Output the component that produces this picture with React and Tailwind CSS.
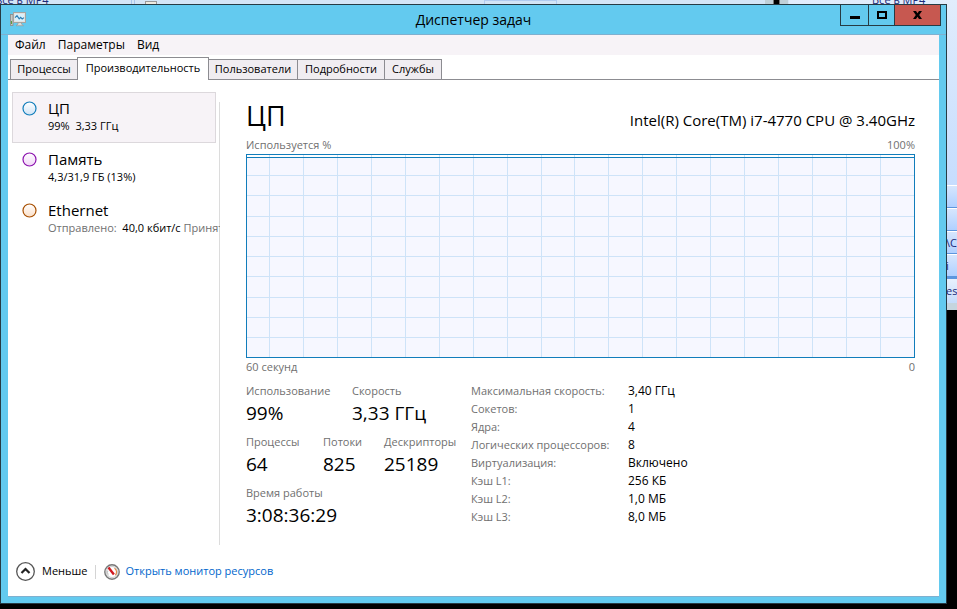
import React, { useState } from 'react';

const tabs = [
  { name: 'Процессы', width: 'w-[68px]' },
  { name: 'Производительность', width: 'w-[132px]' },
  { name: 'Пользователи', width: 'w-[90px]' },
  { name: 'Подробности', width: 'w-[88px]' },
  { name: 'Службы', width: 'w-[58px]' },
];

const details = [
  ['Максимальная скорость:', '3,40 ГГц'],
  ['Сокетов:', '1'],
  ['Ядра:', '4'],
  ['Логических процессоров:', '8'],
  ['Виртуализация:', 'Включено'],
  ['Кэш L1:', '256 КБ'],
  ['Кэш L2:', '1,0 МБ'],
  ['Кэш L3:', '8,0 МБ'],
];

const columns = Array.from({ length: 19 }, (_, i) => 3.4 + i * 5.085);
const rows = Array.from({ length: 9 }, (_, i) => 10.2 + i * 10.03);

function Desktop() {
  return (
    <div className="absolute inset-x-0 top-0 h-[310px] overflow-hidden bg-[#d4e5f6] text-[11px] text-[#1a2a78]" aria-hidden="true">
      <span className="absolute -left-1 -top-2 leading-4">все в MP4</span>
      <span className="absolute left-[131px] top-0 h-2 w-1 border-x border-[#a9c6ec]" />
      <span className="absolute left-[145px] top-px h-2 w-3 border border-[#999] bg-[#eeeae0]" />
      <span className="absolute left-[484px] top-0 h-2 w-[73px] border border-[#b1ccf1]" />
      <span className="absolute left-[765px] top-0 h-2 w-[23px] bg-[#c0d0d8]" />
      <span className="absolute left-[773px] top-0 h-2 w-[7px] border-x border-[#777] bg-black" />
      <div className="absolute right-0 top-0 h-full w-[168px] bg-linear-to-b from-[#e1edfc] to-[#b4d2ff]">
        <span className="absolute -top-2 left-[83px] leading-4">Все в MP4</span>
      </div>
      <div className="absolute right-0 top-[185px] w-[11px]">
        <div className="h-[23px] border-b border-t border-b-[#5d96dd] border-t-white bg-linear-to-b from-[#d6e6fd] to-[#b0d0ff]" />
        <div className="h-[23px] border-b border-t border-b-[#5d96dd] border-t-white bg-linear-to-b from-[#d6e6fd] to-[#b0d0ff]" />
        <div className="h-[23px] overflow-hidden border-b border-t border-b-[#5d96dd] border-t-white bg-linear-to-b from-[#d6e6fd] to-[#b0d0ff] leading-[22px]">\С</div>
        <div className="h-[23px] overflow-hidden border-b border-t border-b-[#5d96dd] border-t-white bg-linear-to-b from-[#d6e6fd] to-[#b0d0ff] leading-[22px]">i</div>
        <div className="h-[26px] overflow-hidden border-t-2 border-t-[#5d96dd] bg-linear-to-b from-[#e8f1fd] to-[#c5dcfb] leading-6">esl</div>
        <div className="h-[7px] bg-[#c5d5de]" />
      </div>
    </div>
  );
}

function AppIcon() {
  return (
    <svg className="h-4 w-4" viewBox="0 0 16 16" aria-hidden="true">
      <rect x="0.5" y="2.5" width="2.5" height="11" fill="#c9c9c6" stroke="#8b8b88" strokeWidth="0.8" />
      <rect x="1" y="9" width="1" height="3" fill="#5c9c40" />
      <rect x="3.5" y="0.5" width="12" height="10" fill="#e3e3e1" stroke="#a5a5a2" />
      <rect x="5" y="2" width="9" height="7" fill="#d9f0fb" />
      <path d="M5 5.6 7 3.6l2.2 3.2 1.4-1.4 1.6 1.6L14 5.6" fill="none" stroke="#2b7fb5" strokeWidth="1.2" />
      <path d="M8 10.5h3.5v1.6l2 1.6H6l2-1.6z" fill="#dcdcda" stroke="#9a9a97" strokeWidth="0.7" />
    </svg>
  );
}

function TitleBar() {
  return (
    <header className="grid h-[30px] grid-cols-3 items-start border-b border-[#7fb0cf]">
      <div className="pl-[9px] pt-[7px]"><AppIcon /></div>
      <h1 className="pt-[5px] text-center text-[14px] leading-5">Диспетчер задач</h1>
      <div className="mr-[5px] flex h-[21px] justify-self-end border-x border-b border-[#263b44]">
        <button aria-label="Свернуть" className="flex w-[27px] items-center justify-center">
          <svg width="10" height="10" viewBox="0 0 10 10"><path d="M0 6h10v3H0z" /></svg>
        </button>
        <button aria-label="Развернуть" className="flex w-[27px] items-center justify-center border-x border-[#263b44]">
          <svg width="10" height="8" viewBox="0 0 10 8"><rect x="1" y="1" width="8" height="6" fill="none" stroke="#000" strokeWidth="2" /></svg>
        </button>
        <button aria-label="Закрыть" className="flex w-[45px] items-center justify-center bg-[#c75850]">
          <svg width="9" height="8" viewBox="0 0 9 8"><path d="M0 0h3l1.5 2.3L6 0h3L6.2 4 9 8H6L4.5 5.7 3 8H0l2.8-4z" /></svg>
        </button>
      </div>
    </header>
  );
}

function SideItem({ id, name, ring, fill, selected, children }) {
  return (
    <li>
      <button
        className={`flex h-[51px] w-[204px] items-start gap-[11px] border pl-[9px] text-left ${
          selected ? 'border-[#dcd8dc] bg-[#f7f3f7]' : 'border-transparent'
        }`}
      >
        <svg className="mt-2 h-[15px] w-[15px] shrink-0" viewBox="0 0 15 15" aria-hidden="true">
          <linearGradient id={id} x1="0" y1="0" x2="0" y2="1">
            <stop offset="0" stopColor="#fff" />
            <stop offset="1" stopColor={fill} />
          </linearGradient>
          <circle cx="7.5" cy="7.5" r="6.5" fill={`url(#${id})`} stroke={ring} strokeWidth="1.2" />
        </svg>
        <span className="block pt-[5px]">
          <span className="block text-[15px] leading-5">{name}</span>
          <span className="block whitespace-nowrap text-[11px] leading-[15px]">{children}</span>
        </span>
      </button>
    </li>
  );
}

function Sidebar() {
  return (
    <nav className="mb-0.5 w-[212px] shrink-0 overflow-hidden bg-[linear-gradient(#dcdcdc,#dcdcdc)] bg-[length:1px_calc(100%-22px)] bg-[position:right_bottom] bg-no-repeat pl-1 pt-3">
      <ul>
        <SideItem id="cpu" name="ЦП" ring="#117dbb" fill="#cfe3f5" selected>99%&nbsp; 3,33 ГГц</SideItem>
        <SideItem id="memory" name="Память" ring="#8b12ae" fill="#f1d5f7">4,3/31,9 ГБ (13%)</SideItem>
        <SideItem id="ethernet" name="Ethernet" ring="#a74f01" fill="#fbdfc8">
          <span className="text-[#707070]">Отправлено:</span>&nbsp; 40,0 кбит/с <span className="text-[#707070]">Принято:</span>
        </SideItem>
      </ul>
    </nav>
  );
}

function Graph() {
  return (
    <div className="h-[204px] border border-[#117dbb] bg-[#f6f7ff]">
      <svg className="block h-full w-full" shapeRendering="crispEdges" role="img" aria-label="Использование ЦП">
        <rect width="100%" height="3" fill="#fff" />
        {columns.map((x) => (
          <line key={x} x1={`${x}%`} x2={`${x}%`} y1="0" y2="100%" stroke="#cee3f8" />
        ))}
        {rows.map((y) => (
          <line key={y} x1="0" x2="100%" y1={`${y}%`} y2={`${y}%`} stroke="#cee3f8" />
        ))}
        <line x1="0" x2="100%" y1="2.5" y2="2.5" stroke="#117dbb" />
      </svg>
    </div>
  );
}

function Stat({ label, value, width }) {
  return (
    <div className={`h-[51px] whitespace-nowrap ${width}`}>
      <dt className="text-[11px] leading-[17px] text-[#707070]">{label}</dt>
      <dd className="text-[19px] leading-7">{value}</dd>
    </div>
  );
}

function Performance() {
  return (
    <section className="min-w-0 flex-1 pl-[26px] pr-6 pt-[19px]">
      <div className="flex items-center justify-between">
        <h2 className="text-[27px] leading-[34px]">ЦП</h2>
        <p className="pt-2 text-[15px] leading-5">Intel(R) Core(TM) i7-4770 CPU @ 3.40GHz</p>
      </div>
      <div className="mt-[3px] flex justify-between pb-px text-[11px] leading-[17px] text-[#707070]">
        <span>Используется %</span><span>100%</span>
      </div>
      <Graph />
      <div className="flex justify-between text-[11px] leading-[18px] text-[#707070]">
        <span>60 секунд</span><span>0</span>
      </div>
      <div className="mt-1.5 flex">
        <dl className="w-[225px] shrink-0">
          <div className="flex">
            <Stat label="Использование" value="99%" width="w-[106px]" />
            <Stat label="Скорость" value="3,33 ГГц" width="w-[106px]" />
          </div>
          <div className="flex">
            <Stat label="Процессы" value="64" width="w-[77px]" />
            <Stat label="Потоки" value="825" width="w-[61px]" />
            <Stat label="Дескрипторы" value="25189" width="w-[77px]" />
          </div>
          <Stat label="Время работы" value="3:08:36:29" width="w-[106px]" />
        </dl>
        <table className="h-[144px] self-start text-[12px] leading-[18px]">
          <tbody>
            {details.map(([label, value]) => (
              <tr key={label}>
                <th className="w-[157px] whitespace-nowrap p-0 text-left text-[11px] font-normal text-[#707070]">{label}</th>
                <td className="whitespace-nowrap p-0">{value}</td>
              </tr>
            ))}
          </tbody>
        </table>
      </div>
    </section>
  );
}

function Footer() {
  return (
    <footer className="flex h-[49px] items-center pl-2 text-[11px]">
      <button className="flex items-center gap-[7px]">
        <svg className="h-[19px] w-[19px]" viewBox="0 0 19 19" fill="none" aria-hidden="true">
          <circle cx="9.5" cy="9.5" r="8.8" stroke="#555" strokeWidth="1.3" />
          <path d="m5.5 11 4-4 4 4" stroke="#222" strokeWidth="2.2" />
        </svg>
        Меньше
      </button>
      <span className="ml-2 h-[14px] w-px bg-[#d4d4d4]" />
      <a href="#monitor" className="ml-2 flex items-center gap-[5px] text-[#0066cc]">
        <svg className="h-4 w-4" viewBox="0 0 16 16" fill="none" aria-hidden="true">
          <circle cx="8" cy="8" r="7.2" fill="#eee" stroke="#777" strokeWidth="1.4" />
          <circle cx="8" cy="8" r="5.5" fill="#fff" stroke="#bbb" strokeWidth="0.7" />
          <path d="M10.5 4.2a4.6 4.6 0 0 1 .8 7" stroke="#e08a4a" strokeWidth="1.2" />
          <path d="M4.2 10.6a4.6 4.6 0 0 1-.4-4" stroke="#bbb" />
          <path d="m4.5 3.6 5.4 6.8" stroke="#d01820" strokeWidth="2.4" />
        </svg>
        Открыть монитор ресурсов
      </a>
    </footer>
  );
}

export default function App() {
  const [active, setActive] = useState('Производительность');
  return (
    <div className="relative flex min-h-screen flex-col bg-black pb-[5px] pr-2.5 pt-1 font-['Open_Sans','Noto_Sans',sans-serif] text-black">
      <Desktop />
      <main className="relative flex flex-1 flex-col border border-[#263b44] bg-[#63caef]">
        <TitleBar />
        <div className="mx-[7px] mb-1.5 flex flex-1 flex-col border-b border-[#7fb0cf] bg-white">
          <nav className="flex h-5 gap-3 bg-[#f7f3f7] pl-[7px] text-[12px] leading-5">
            <button>Файл</button><button>Параметры</button><button>Вид</button>
          </nav>
          <div role="tablist" className="flex h-[25px] items-end border-b border-[#8c8c91] pl-0.5 text-[11px]">
            {tabs.map(({ name, width }) => (
              <button
                key={name}
                role="tab"
                aria-selected={active === name}
                onClick={() => setActive(name)}
                className={`-mr-px flex shrink-0 items-center justify-center whitespace-nowrap border border-b-0 border-[#8c8c91] ${width} ${
                  active === name ? 'z-10 -mb-px h-[23px] bg-white pb-0.5' : 'h-5 bg-[#f0edf1]'
                }`}
              >
                {name}
              </button>
            ))}
          </div>
          <div className="flex flex-1">
            <Sidebar />
            <Performance />
          </div>
          <Footer />
        </div>
      </main>
    </div>
  );
}
